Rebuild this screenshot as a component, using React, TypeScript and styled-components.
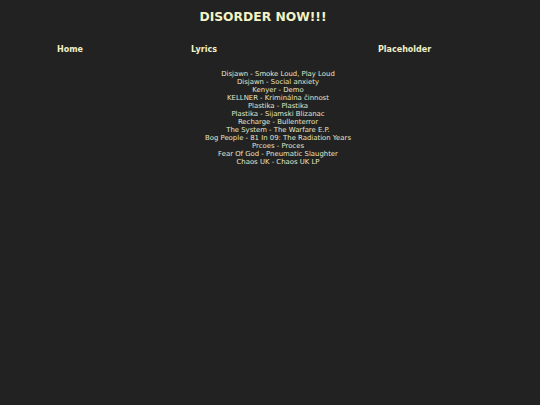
import React from 'react'
import styled, { createGlobalStyle } from 'styled-components'

const GlobalStyle = createGlobalStyle`
  html, body {
    margin: 0;
    padding: 0;
    background: #222222;
  }
  body {
    font-family: 'DejaVu Sans', Verdana, sans-serif;
    color: #f0f0c8;
  }
`

const Page = styled.div`
  min-height: 405px;
  display: flex;
  flex-direction: column;
`

const Title = styled.h1`
  margin: 10px 0 0;
  padding-right: 14px;
  font-size: 12.3px;
  line-height: 14px;
  font-weight: bold;
  text-align: center;
  color: #f3f3c6;
`

const Nav = styled.nav`
  display: grid;
  grid-template-columns: 134px 187px auto;
  padding-left: 57px;
  margin-top: 21px;
`

const NavLink = styled.a`
  font-size: 8px;
  line-height: 10px;
  font-weight: bold;
  color: #f0f0c8;
  text-decoration: none;
`

const AlbumList = styled.ul`
  list-style: none;
  margin: 15px 0 0;
  padding: 0 0 0 16px;
  text-align: center;
`

const Album = styled.li`
  font-size: 6.9px;
  line-height: 8px;
  color: #e6e6c8;
`

const albums = [
  'Disjawn - Smoke Loud, Play Loud',
  'Disjawn - Social anxiety',
  'Kenyer - Demo',
  'KELLNER - Kriminálna činnost',
  'Plastika - Plastika',
  'Plastika - Sijamski Blizanac',
  'Recharge - Bullenterror',
  'The System - The Warfare E.P.',
  'Bog People - 81 In 09: The Radiation Years',
  'Prcoes - Proces',
  'Fear Of God - Pneumatic Slaughter',
  'Chaos UK - Chaos UK LP',
]

export default function App() {
  return (
    <>
      <GlobalStyle />
      <Page>
        <Title>DISORDER NOW!!!</Title>
        <Nav>
          <NavLink href="#">Home</NavLink>
          <NavLink href="#">Lyrics</NavLink>
          <NavLink href="#">Placeholder</NavLink>
        </Nav>
        <AlbumList>
          {albums.map((a) => (
            <Album key={a}>{a}</Album>
          ))}
        </AlbumList>
      </Page>
    </>
  )
}
